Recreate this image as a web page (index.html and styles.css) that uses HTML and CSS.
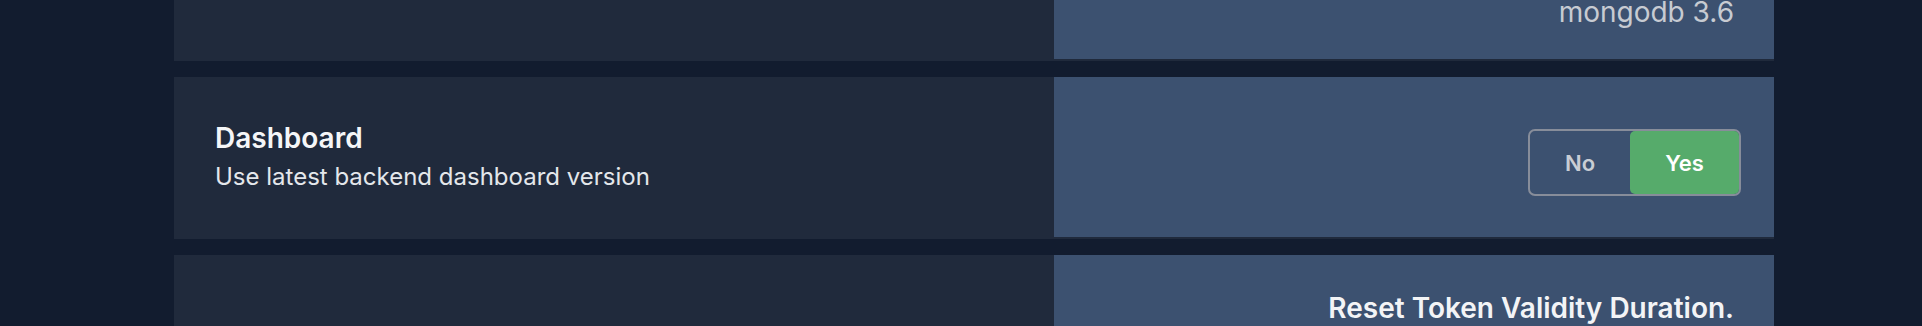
FILE: index.html
```html
<!DOCTYPE html>
<html lang="en">
<head>
<meta charset="utf-8">
<title>Settings</title>
<link rel="stylesheet" href="styles.css">
</head>
<body>
<main class="settings">
  <section class="card card-top">
    <div class="card-info"></div>
    <div class="card-control">
      <span class="value-text">mongodb 3.6</span>
    </div>
  </section>

  <section class="card card-toggle">
    <div class="card-info">
      <h3 class="card-title">Dashboard</h3>
      <p class="card-desc">Use latest backend dashboard version</p>
    </div>
    <div class="card-control">
      <div class="toggle" role="group" aria-label="Dashboard">
        <button class="toggle-opt">No</button>
        <button class="toggle-opt is-active">Yes</button>
      </div>
    </div>
  </section>

  <section class="card card-bottom">
    <div class="card-info"></div>
    <div class="card-control">
      <span class="label-text">Reset Token Validity Duration.</span>
    </div>
  </section>
</main>
</body>
</html>
```

FILE: styles.css
```css
* { box-sizing: border-box; }

html, body {
  margin: 0;
  padding: 0;
  background: #121c2f;
  font-family: Inter, "Noto Sans", "Liberation Sans", sans-serif;
  overflow: hidden;
}

.settings {
  width: 1600px;
  margin-left: 174px;
  display: flex;
  flex-direction: column;
  gap: 16px;
}

.card {
  display: grid;
  grid-template-columns: 880px 720px;
  background: #202a3c;
  padding-bottom: 2px;
}

.card-info {
  padding-left: 41px;
  display: flex;
  flex-direction: column;
  justify-content: center;
}

.card-control {
  background: #3c5170;
  display: flex;
  justify-content: flex-end;
  align-items: flex-start;
  padding-right: 40px;
}

/* card 1 (scrolled partly out of view) */
.card-top .card-control {
  height: 59px;
}

.value-text {
  font-size: 28px;
  line-height: 25px;
  font-weight: 400;
  color: #c7cbd2;
}

/* card 2 */
.card-toggle .card-control {
  height: 160px;
  padding-top: 52px;
  padding-right: 33px;
}

.card-title {
  margin: 0;
  font-size: 28px;
  line-height: 36px;
  font-weight: 600;
  color: #f5f6f8;
}

.card-desc {
  margin: 3px 0 0;
  font-size: 24px;
  line-height: 36px;
  font-weight: 400;
  color: #e4e7eb;
}

.toggle {
  display: flex;
  height: 67px;
  border: 2px solid #878d9a;
  border-radius: 7px;
}

.toggle-opt {
  border: 0;
  margin: 0;
  padding: 0;
  background: transparent;
  font-family: inherit;
  font-size: 22px;
  font-weight: 600;
  color: #c9cdd4;
  width: 100px;
  border-radius: 5px;
}

.toggle-opt.is-active {
  width: 109px;
  background: #56ab6b;
  color: #ffffff;
}

/* card 3 */
.card-bottom .card-control {
  height: 120px;
  padding-top: 36px;
}

.label-text {
  font-size: 28px;
  line-height: 34px;
  font-weight: 600;
  color: #f3f4f6;
}
```
